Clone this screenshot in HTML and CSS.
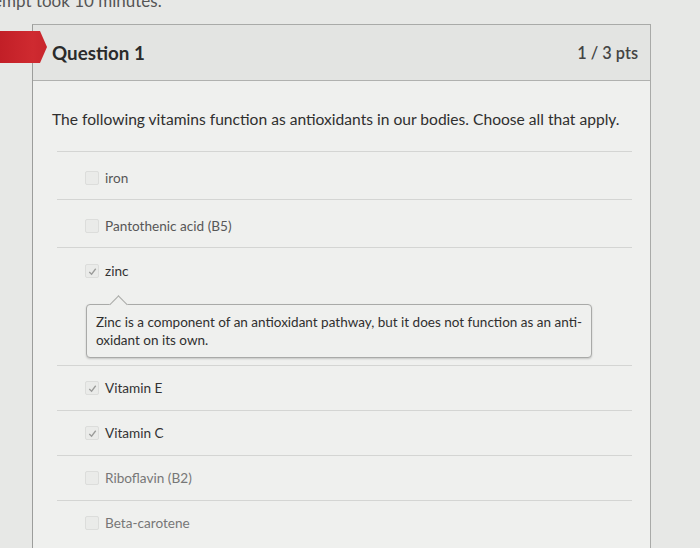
FILE: index.html
```html
<!DOCTYPE html>
<html>
<head>
<meta charset="utf-8">
<link rel="stylesheet" href="styles.css">
</head>
<body>
<div class="topline">This attempt took 10 minutes.</div>
<div class="card">
  <div class="flag"></div>
  <div class="header">
    <span class="qtitle">Question 1</span>
    <span class="pts">1 / 3 pts</span>
  </div>
  <div class="qtext">The following vitamins function as antioxidants in our bodies. Choose all that apply.</div>
  <div class="answers">
    <div class="answer first"><span class="box"></span><span class="label muted">iron</span></div>
    <div class="answer first"><span class="box"></span><span class="label muted">Pantothenic acid (B5)</span></div>
    <div class="answer-block">
      <div class="answer zinc"><span class="box checked"><svg viewBox="0 0 12 12"><path d="M2.5 6.5 L5 9 L9.5 3"/></svg></span><span class="label">zinc</span></div>
      <div class="feedback">Zinc is a component of an antioxidant pathway, but it does not function as an anti-oxidant on its own.</div>
    </div>
    <div class="answer"><span class="box checked"><svg viewBox="0 0 12 12"><path d="M2.5 6.5 L5 9 L9.5 3"/></svg></span><span class="label">Vitamin E</span></div>
    <div class="answer"><span class="box checked"><svg viewBox="0 0 12 12"><path d="M2.5 6.5 L5 9 L9.5 3"/></svg></span><span class="label">Vitamin C</span></div>
    <div class="answer"><span class="box"></span><span class="label light">Riboflavin (B2)</span></div>
    <div class="answer"><span class="box"></span><span class="label light">Beta-carotene</span></div>
  </div>
</div>
</body>
</html>
```
FILE: styles.css
```css
html, body {
  margin: 0;
  padding: 0;
}
body {
  width: 700px;
  height: 548px;
  overflow: hidden;
  background: #e7e8e6;
  font-family: Lato, "Open Sans", sans-serif;
  color: #333;
}
.topline {
  font-size: 17px;
  line-height: 20px;
  color: #555;
  margin: -9px 0 0 -62px;
  white-space: nowrap;
}
.card {
  position: relative;
  margin: 13px 0 0 32px;
  width: 617px;
  height: 600px;
  background: #eff0ee;
  border-left: 1px solid #9c9d9b;
  border-right: 1px solid #a9aaa8;
  border-top: 1px solid #a9aaa8;
}
.flag {
  position: absolute;
  left: -33px;
  top: 6px;
  width: 47px;
  height: 32px;
  background: linear-gradient(90deg, #c21f27 0%, #cf2a30 70%, #c8252c 100%);
  clip-path: polygon(0 0, 40px 0, 47px 16px, 40px 32px, 0 32px);
}
.header {
  height: 55px;
  background: #e3e4e2;
  border-bottom: 1px solid #b0b1af;
  display: flex;
  align-items: center;
  justify-content: space-between;
  padding: 0 12px 0 19px;
}
.qtitle {
  font-size: 18.8px;
  font-weight: 700;
  color: #2b2b2b;
}
.pts {
  font-size: 16.3px;
  font-weight: 600;
  color: #444;
}
.qtext {
  padding: 28px 0 0 19px;
  font-size: 15.6px;
  line-height: 20px;
  color: #2f2f2f;
  margin-bottom: 22px;
}
.answers {
  margin: 0 18px 0 24px;
}
.answer {
  border-top: 1px solid #d4d5d3;
  height: 45px;
  display: flex;
  align-items: center;
  padding-left: 28px;
  box-sizing: border-box;
}
.answer.first {
  height: 48px;
  padding-top: 4px;
}
.answer-block {
  border-top: 1px solid #d4d5d3;
  height: 118px;
  box-sizing: border-box;
}
.answer.zinc {
  border-top: none;
  height: 46px;
}
.box {
  width: 12px;
  height: 12px;
  border: 1px solid #dcdddb;
  border-radius: 2px;
  background: #eaebe9;
  margin-right: 6px;
  flex: none;
  display: flex;
  align-items: center;
  justify-content: center;
}
.box svg {
  width: 11px;
  height: 11px;
}
.box svg path {
  fill: none;
  stroke: #9a9b99;
  stroke-width: 1.4;
}
.label {
  font-size: 13.6px;
  color: #333;
}
.label.muted {
  color: #575757;
}
.label.light {
  color: #777;
}
.feedback {
  position: relative;
  margin: 10px 0 0 29px;
  width: 506px;
  box-sizing: border-box;
  border: 1px solid #a9aaa8;
  border-radius: 4px;
  background: #eff0ee;
  box-shadow: 0 1px 2px rgba(0,0,0,0.18);
  padding: 8px 7px 8px 9px;
  font-size: 13.5px;
  line-height: 18px;
  color: #2f2f2f;
}
.feedback::before {
  content: "";
  position: absolute;
  left: 25px;
  top: -7px;
  width: 12px;
  height: 12px;
  background: #eff0ee;
  border-left: 1px solid #a9aaa8;
  border-top: 1px solid #a9aaa8;
  transform: rotate(45deg);
}
```
